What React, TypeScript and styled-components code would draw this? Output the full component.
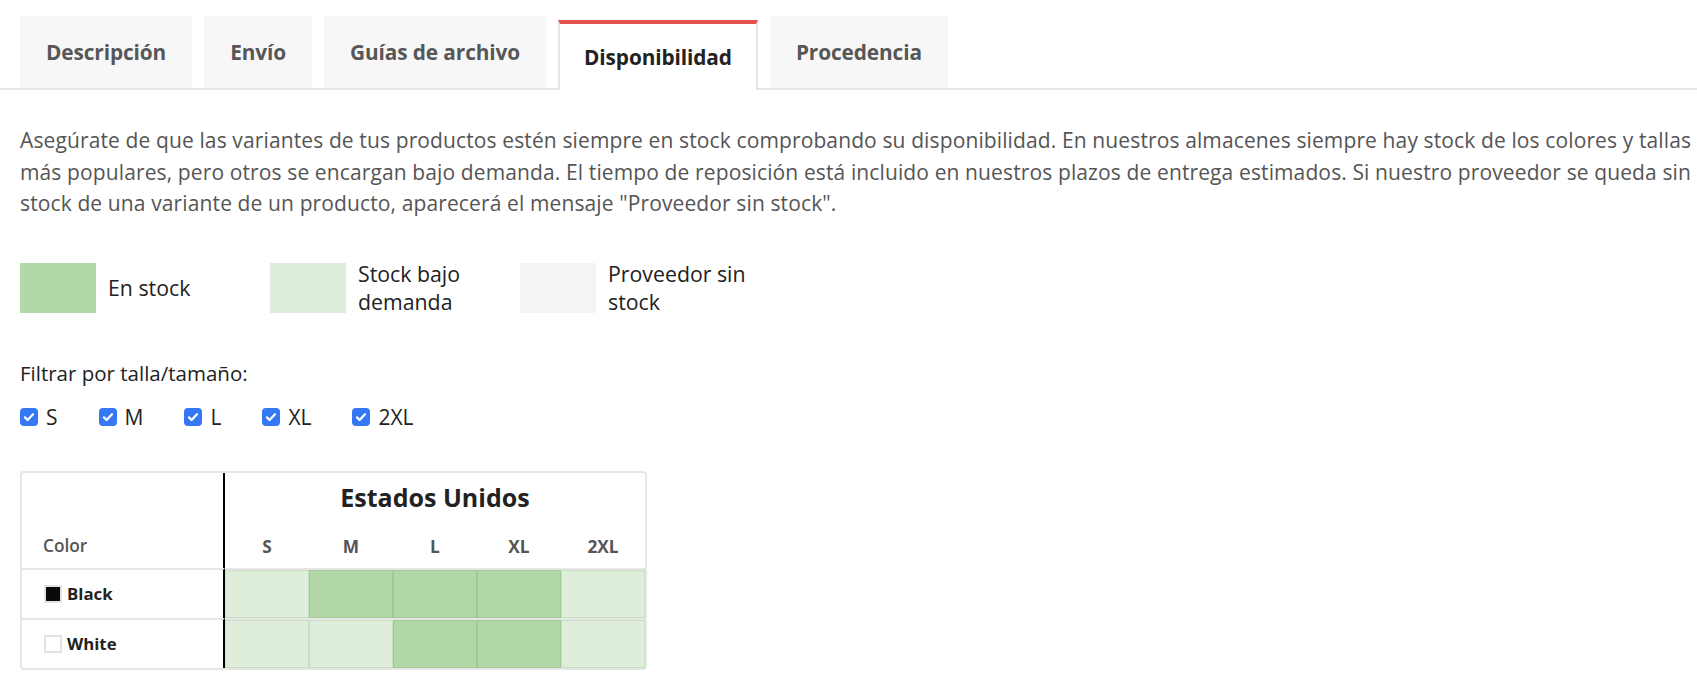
import React from 'react';
import styled, { createGlobalStyle } from 'styled-components';

const GlobalStyle = createGlobalStyle`
  body {
    margin: 0;
    background: #fff;
    font-family: 'Open Sans', 'Noto Sans', sans-serif;
    color: #222;
  }
`;

const Page = styled.div`
  padding: 16px 0 0 20px;
`;

const TabBar = styled.div`
  display: flex;
  align-items: flex-end;
  gap: 12px;
  border-bottom: 2px solid #e6e6e6;
  margin-left: -20px;
  padding-left: 20px;
`;

const Tab = styled.div<{ $active?: boolean }>`
  height: ${(p) => (p.$active ? '66px' : '72px')};
  padding: 0 ${(p) => (p.$active ? '24px' : '26px')};
  display: flex;
  align-items: center;
  justify-content: center;
  font-size: 20.8px;
  font-weight: 700;
  letter-spacing: -0.1px;
  color: ${(p) => (p.$active ? '#222' : '#575757')};
  background: ${(p) => (p.$active ? '#fff' : '#f7f7f7')};
  border-top: ${(p) => (p.$active ? '4px solid #e2534b' : 'none')};
  border-left: ${(p) => (p.$active ? '2px solid #e4e4e4' : 'none')};
  border-right: ${(p) => (p.$active ? '2px solid #e4e4e4' : 'none')};
  margin-bottom: ${(p) => (p.$active ? '-2px' : '0')};
  box-sizing: content-box;
  cursor: pointer;
`;

const Intro = styled.p`
  margin: 35px 0 0;
  font-size: 21px;
  letter-spacing: 0.12px;
  line-height: 31.5px;
  color: #555;
`;

const Legend = styled.div`
  display: flex;
  gap: 20px;
  margin-top: 40px;
`;

const LegendItem = styled.div`
  flex: 0 0 230px;
  display: flex;
  align-items: center;
  gap: 12px;
`;

const Swatch = styled.div<{ $color: string }>`
  flex: 0 0 76px;
  height: 50px;
  background: ${(p) => p.$color};
`;

const LegendText = styled.span`
  font-size: 21.3px;
  line-height: 28px;
  color: #222;
  max-width: 142px;
`;

const FilterLabel = styled.div`
  margin-top: 43px;
  font-size: 20.5px;
  line-height: 28px;
  color: #222;
`;

const SizeFilters = styled.div`
  display: flex;
  gap: 41px;
  margin-top: 16px;
`;

const SizeOption = styled.label`
  display: flex;
  align-items: center;
  gap: 8px;
  font-size: 21px;
  line-height: 28px;
  color: #222;
  cursor: pointer;
`;

const CheckBox = styled.span`
  width: 18px;
  height: 18px;
  border-radius: 4px;
  background: #3478f6;
  display: flex;
  align-items: center;
  justify-content: center;
`;

const StockTable = styled.div`
  margin-top: 40px;
  width: 623px;
  border: 2px solid #e6e6e6;
  border-radius: 4px;
  display: grid;
  grid-template-columns: 203px repeat(5, 1fr);
  grid-template-rows: 50px 45px 50px 50px;
`;

const ColorHead = styled.div`
  grid-row: 1 / span 2;
  border-right: 2px solid #000;
  display: flex;
  align-items: flex-end;
  padding: 0 0 11px 21px;
  font-size: 17.3px;
  font-weight: 600;
  color: #555;
`;

const RegionHead = styled.div`
  grid-column: 2 / span 5;
  display: flex;
  align-items: flex-end;
  justify-content: center;
  padding-bottom: 9px;
  font-size: 25px;
  font-weight: 700;
  color: #222;
`;

const SizeHead = styled.div`
  display: flex;
  align-items: center;
  justify-content: center;
  padding-top: 3px;
  font-size: 17.3px;
  font-weight: 700;
  color: #555;
`;

const ColorCell = styled.div`
  border-top: 2px solid #e6e6e6;
  border-right: 2px solid #000;
  display: flex;
  align-items: center;
  gap: 5px;
  padding-left: 22px;
  font-size: 16.8px;
  font-weight: 700;
  color: #222;
`;

const ColorChip = styled.span<{ $color: string }>`
  width: 14px;
  height: 14px;
  border: 2px solid #e3e3e3;
  background: ${(p) => p.$color};
`;

const StockCell = styled.div<{ $inStock: boolean }>`
  border-top: 2px solid #e6e6e6;
  background: ${(p) => (p.$inStock ? '#b2d7a7' : '#dfeedb')};
  box-shadow: inset 0 0 0 1px ${(p) => (p.$inStock ? '#9fca94' : '#c9dfc4')};
`;

const tabs = ['Descripción', 'Envío', 'Guías de archivo', 'Disponibilidad', 'Procedencia'];
const sizes = ['S', 'M', 'L', 'XL', '2XL'];

const rows = [
  { name: 'Black', chip: '#0a0a0a', stock: [false, true, true, true, false] },
  { name: 'White', chip: '#ffffff', stock: [false, false, true, true, false] },
];

const legend = [
  { color: '#b3d8a8', label: 'En stock' },
  { color: '#dfeedc', label: 'Stock bajo demanda' },
  { color: '#f4f4f4', label: 'Proveedor sin stock' },
];

const Check = () => (
  <svg width="12" height="12" viewBox="0 0 12 12" fill="none">
    <path d="M2 6.4l2.6 2.6L10 3.2" stroke="#fff" strokeWidth="2.2" strokeLinecap="round" strokeLinejoin="round" />
  </svg>
);

const App: React.FC = () => {
  return (
    <>
      <GlobalStyle />
      <Page>
        <TabBar>
          {tabs.map((t) => (
            <Tab key={t} $active={t === 'Disponibilidad'}>
              {t}
            </Tab>
          ))}
        </TabBar>

        <Intro>
          Asegúrate de que las variantes de tus productos estén siempre en stock comprobando su disponibilidad. En
          nuestros almacenes siempre hay stock de los colores y tallas más populares, pero otros se encargan bajo
          demanda. El tiempo de reposición está incluido en nuestros plazos de entrega estimados. Si nuestro proveedor
          se queda sin stock de una variante de un producto, aparecerá el mensaje "Proveedor sin stock".
        </Intro>

        <Legend>
          {legend.map((l) => (
            <LegendItem key={l.label}>
              <Swatch $color={l.color} />
              <LegendText>{l.label}</LegendText>
            </LegendItem>
          ))}
        </Legend>

        <FilterLabel>Filtrar por talla/tamaño:</FilterLabel>
        <SizeFilters>
          {sizes.map((s) => (
            <SizeOption key={s}>
              <CheckBox>
                <Check />
              </CheckBox>
              {s}
            </SizeOption>
          ))}
        </SizeFilters>

        <StockTable>
          <ColorHead>Color</ColorHead>
          <RegionHead>Estados Unidos</RegionHead>
          {sizes.map((s) => (
            <SizeHead key={s}>{s}</SizeHead>
          ))}
          {rows.map((r) => (
            <React.Fragment key={r.name}>
              <ColorCell>
                <ColorChip $color={r.chip} />
                {r.name}
              </ColorCell>
              {r.stock.map((inStock, i) => (
                <StockCell key={i} $inStock={inStock} />
              ))}
            </React.Fragment>
          ))}
        </StockTable>
      </Page>
    </>
  );
};

export default App;
